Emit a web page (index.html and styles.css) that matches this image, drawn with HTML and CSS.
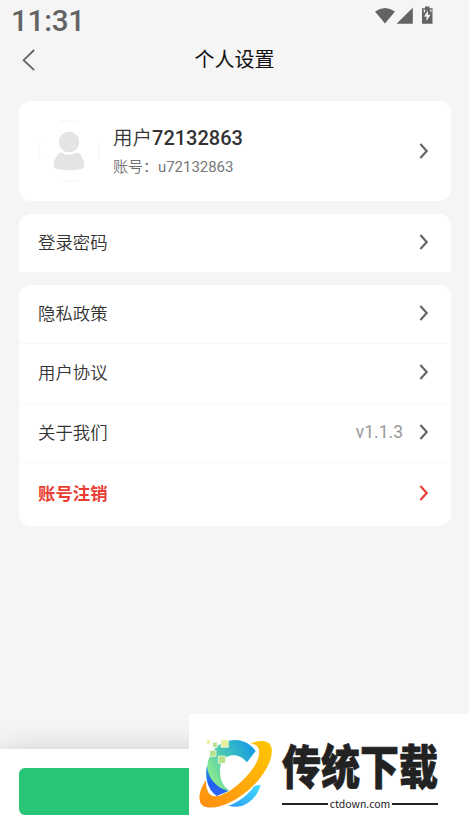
FILE: index.html
```html
<!DOCTYPE html>
<html lang="zh-CN">
<head>
<meta charset="utf-8">
<title>个人设置</title>
<link rel="stylesheet" href="styles.css">
</head>
<body>
<div class="screen">
  <header class="status">
    <span class="time">11:31</span>
    <svg class="status-icons" width="60" height="20" viewBox="0 0 60 20">
      <path d="M0 5.5Q10-1.5 20 5.5L10 17.5Z"/>
      <path d="M21.5 17.7L37.8 1.7V17.7Z"/>
      <path d="M47 2.2h3V.5h4.5v1.7h3v15.5H47Z"/>
      <path class="bolt" d="M53 4.5l-4 6h2.5v4.5l4-6.2h-2.5ZM48.5 3.8h2.2L49 7.5ZM54.5 3.8h2v3Z"/>
    </svg>
  </header>
  <nav class="nav">
    <svg class="back" width="14" height="24" viewBox="0 0 14 24"><path d="M12.2 2L1.6 12.2L12.2 22.2"/></svg>
    <h1>个人设置</h1>
  </nav>
  <main class="content">
    <section class="card profile">
      <svg class="avatar" width="62" height="62" viewBox="0 0 62 62">
        <path class="rim" d="M22 1.5Q31 .3 40 1.5M22 60.5Q31 61.7 40 60.5M1.5 22Q.3 31 1.5 40M60.5 22Q61.7 31 60.5 40"/>
        <circle cx="31" cy="22" r="10.3"/>
        <path d="M22.8 32.3Q31 37.6 39.2 32.3C44 35 46.5 41 46.2 47.1C44 51.5 18 51.5 15.8 47.1C15.5 41 18 35 22.8 32.3Z"/>
      </svg>
      <div class="who">
        <div class="name">用户<b>72132863</b></div>
        <div class="account">账号：<span>u72132863</span></div>
      </div>
      <svg class="chev" viewBox="0 0 10 18"><path d="M1.4 2L7.7 9L1.4 16"/></svg>
    </section>
    <section class="card single">
      <div class="row"><span>登录密码</span><svg class="chev" viewBox="0 0 10 18"><path d="M1.4 2L7.7 9L1.4 16"/></svg></div>
    </section>
    <section class="card">
      <div class="row"><span>隐私政策</span><svg class="chev" viewBox="0 0 10 18"><path d="M1.4 2L7.7 9L1.4 16"/></svg></div>
      <div class="row"><span>用户协议</span><svg class="chev" viewBox="0 0 10 18"><path d="M1.4 2L7.7 9L1.4 16"/></svg></div>
      <div class="row"><span>关于我们</span><em>v1.1.3</em><svg class="chev" viewBox="0 0 10 18"><path d="M1.4 2L7.7 9L1.4 16"/></svg></div>
      <div class="row danger"><span>账号注销</span><svg class="chev" viewBox="0 0 10 18"><path d="M1.4 2L7.7 9L1.4 16"/></svg></div>
    </section>
  </main>
  <footer class="footer"><div class="button"></div></footer>
  <aside class="brand">
    <svg class="logo" width="80" height="75" viewBox="30 75 240 225">
      <defs>
        <linearGradient id="ring" x1="0" y1="1" x2="1" y2="0"><stop offset="0" stop-color="#ff8d12"/><stop offset="1" stop-color="#ffc800"/></linearGradient>
        <linearGradient id="arc" x1="0" y1=".8" x2="1" y2="0.2"><stop offset=".1" stop-color="#8ceb8d"/><stop offset=".5" stop-color="#44c4b5"/><stop offset="1" stop-color="#139be9"/></linearGradient>
        <linearGradient id="deep" x1="0" y1="0" x2="0" y2="1"><stop offset="0" stop-color="#26a5db"/><stop offset=".6" stop-color="#245ff0"/><stop offset="1" stop-color="#2868f6"/></linearGradient>
        <linearGradient id="base" x1="0" y1="1" x2="1" y2="0"><stop offset="0" stop-color="#2c9cf0"/><stop offset="1" stop-color="#42dcff"/></linearGradient>
      </defs>
      <path fill="url(#arc)" d="M64 165C72 118 106 91 145 90C171 89 193 101 209 123L183 157C170 141 153 134 137 136C116 140 103 156 102 179C101 205 110 229 130 241L110 251C80 235 60 204 64 165Z"/>
      <path fill="url(#deep)" d="M63 166C66 204 90 234 127 243L92 258C65 239 55 202 63 166Z"/>
      <path fill="url(#base)" d="M127 287C161 276 186 253 206 227L224 224C212 270 171 301 127 287Z"/>
      <path fill="url(#ring)" d="M193 101C217 90 247 89 255 108C266 139 240 189 201 228C156 273 89 304 53 289C32 277 39 239 60 210C59 232 65 257 85 259C122 260 175 213 203 172C223 143 230 101 193 101Z"/>
      <g fill="#e5f19a" stroke="#fff" stroke-width="2"><path d="M62 89h11v13H62ZM105 89h22v23h-22Z"/><path fill="#b4e18a" d="M80 97h14v15H80ZM71 121h19v18H71ZM97 138h22v22H97Z"/></g>
    </svg>
    <div class="wordmark">
      <div class="brand-name">传统下载</div>
      <div class="domain">ctdown.com</div>
    </div>
  </aside>
</div>
</body>
</html>
```
FILE: styles.css
```css
* { box-sizing: border-box; }
body {
  margin: 0;
  font-family: Roboto, "Noto Sans CJK SC", sans-serif;
  color: #333;
}
.screen {
  position: relative;
  display: flex;
  flex-direction: column;
  height: 834px;
  overflow: hidden;
  background: #f5f5f5;
}
.status {
  display: flex;
  justify-content: space-between;
  height: 40px;
  padding: 6px 34px 0 11px;
  color: #636363;
}
.time { font-size: 29.5px; font-weight: 500; line-height: 31px; letter-spacing: -.2px; }
.status-icons { fill: #636363; }
.status-icons .bolt { fill: #f5f5f5; }
.nav {
  display: grid;
  grid-template-columns: 60px 1fr 60px;
  align-items: center;
  height: 39px;
}
.back { margin-left: 22px; fill: none; stroke: #636363; stroke-width: 1.8; }
h1 { margin: 0; text-align: center; font-size: 20px; font-weight: 400; line-height: 30px; color: #111; }
.content {
  display: flex;
  flex: 1;
  flex-direction: column;
  gap: 13px;
  padding: 22px 18px 0 19px;
}
.card { border-radius: 12px; background: #fff; }
.profile { display: flex; align-items: center; height: 100px; padding: 0 22px 0 19px; }
.single { border-radius: 12px 12px 0 0; height: 58px; }
.avatar { fill: #e4e4e4; }
.rim { fill: none; stroke: #f7f7f7; stroke-width: 1.5; }
.who { flex: 1; padding: 2px 0 0 13px; }
.name { font-size: 19.5px; font-weight: 350; line-height: 30px; }
.name b { font-family: Roboto, sans-serif; font-size: 20px; font-weight: 500; }
.account { font-size: 15px; font-weight: 350; line-height: 27px; color: #707070; }
.account span { font-weight: 400; color: #777; letter-spacing: -.05px; }
.chev { width: 10px; height: 18px; fill: none; stroke: #666; stroke-width: 2.2; }
.row {
  display: flex;
  align-items: center;
  height: 59.3px;
  padding: 0 22px 2px 19px;
  border-bottom: 1px solid #f8f8f8;
  font-size: 17.4px;
  font-weight: 350;
}
.single .row { height: 58px; border: 0; }
.row span { flex: 1; margin-top: -1px; }
.row em { margin: 1px 16px 0 0; font-size: 17.5px; font-style: normal; font-weight: 400; color: #999; }
.row.danger { height: 63px; border: 0; padding-bottom: 2px; font-weight: 700; color: #e83e34; }
.danger .chev { stroke: #e83e34; }
.footer {
  height: 85px;
  padding: 19px;
  background: #fff;
  box-shadow: 0 0 30px rgba(40, 60, 50, .18);
}
.button { height: 47px; border-radius: 6px; background: #28c576; }
.brand {
  position: absolute;
  right: 0;
  bottom: 0;
  display: flex;
  width: 280px;
  height: 120px;
  padding: 21px 0 0 7px;
  background: #fff;
}
.wordmark { width: 156px; margin-left: 6px; color: #222; }
.brand-name {
  width: max-content;
  height: 40px;
  margin-top: 9px;
  font-family: "Noto Sans CJK SC", sans-serif;
  font-size: 39px;
  font-weight: 900;
  line-height: 40px;
  transform: scaleY(1.2);
  -webkit-text-stroke: .6px #222;
}
.domain {
  display: flex;
  align-items: center;
  gap: 2px;
  margin-top: 13px;
  font-family: "Noto Sans CJK SC", sans-serif;
  font-size: 10.5px;
  font-weight: 400;
  line-height: 13px;
}
.domain::before, .domain::after { content: ""; flex: 1; height: 2px; background: #222; }
```
